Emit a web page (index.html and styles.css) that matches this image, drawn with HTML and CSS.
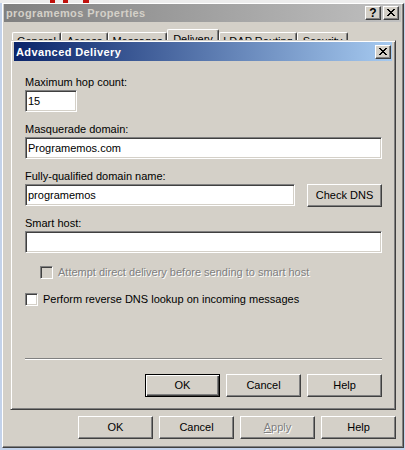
FILE: index.html
```html
<!DOCTYPE html>
<html>
<head>
<meta charset="utf-8">
<link rel="stylesheet" href="styles.css">
</head>
<body>
<div class="strip"><span class="mark m1"></span><span class="mark m2"></span><span class="mark m3"></span></div>
<div class="window">
  <div class="titlebar inactive">
    <span class="title-text">programemos Properties</span>
    <div class="cap-buttons">
      <span class="cap-btn qmark">?</span>
      <span class="cap-btn"><svg class="xglyph" width="8" height="7" viewBox="0 0 8 7"><path d="M0 0h2v1h-2z M6 0h2v1h-2z M1 1h2v1h-2z M5 1h2v1h-2z M2 2h4v1h-4z M3 3h2v1h-2z M2 4h4v1h-4z M1 5h2v1h-2z M5 5h2v1h-2z M0 6h2v1h-2z M6 6h2v1h-2z" fill="#000"/></svg></span>
    </div>
  </div>
  <div class="client">
    <div class="tabs">
      <div class="tab t-general">General</div>
      <div class="tab t-access">Access</div>
      <div class="tab t-messages">Messages</div>
      <div class="tab t-delivery selected">Delivery</div>
      <div class="tab t-ldap">LDAP Routing</div>
      <div class="tab t-security">Security</div>
    </div>
    <div class="panel"></div>
    <div class="buttons outer-buttons">
      <button class="btn">OK</button>
      <button class="btn">Cancel</button>
      <button class="btn disabled"><span class="ul">A</span>pply</button>
      <button class="btn">Help</button>
    </div>
  </div>
</div>

<div class="dialog">
  <div class="titlebar active">
    <span class="title-text">Advanced Delivery</span>
    <div class="cap-buttons">
      <span class="cap-btn"><svg class="xglyph" width="8" height="7" viewBox="0 0 8 7"><path d="M0 0h2v1h-2z M6 0h2v1h-2z M1 1h2v1h-2z M5 1h2v1h-2z M2 2h4v1h-4z M3 3h2v1h-2z M2 4h4v1h-4z M1 5h2v1h-2z M5 5h2v1h-2z M0 6h2v1h-2z M6 6h2v1h-2z" fill="#000"/></svg></span>
    </div>
  </div>
  <div class="dlg-body">
    <div class="field">
      <div class="label">Maximum hop count:</div>
      <div class="edit edit-short">15</div>
    </div>
    <div class="field">
      <div class="label">Masquerade domain:</div>
      <div class="edit">Programemos.com</div>
    </div>
    <div class="field">
      <div class="label">Fully-qualified domain name:</div>
      <div class="edit-row">
        <div class="edit edit-fqdn">programemos</div>
        <button class="btn">Check DNS</button>
      </div>
    </div>
    <div class="field field-smart">
      <div class="label">Smart host:</div>
      <div class="edit"></div>
    </div>
    <div class="checkrow check-indent">
      <span class="check disabled"></span>
      <span class="check-label disabled-text">Attempt direct delivery before sending to smart host</span>
    </div>
    <div class="checkrow check-reverse">
      <span class="check"></span>
      <span class="check-label">Perform reverse DNS lookup on incoming messages</span>
    </div>
    <div class="separator"></div>
    <div class="buttons dlg-buttons">
      <button class="btn default">OK</button>
      <button class="btn">Cancel</button>
      <button class="btn">Help</button>
    </div>
  </div>
</div>
</body>
</html>
```
FILE: styles.css
```css
* { box-sizing: border-box; }
html, body { margin: 0; padding: 0; }
body {
  width: 405px;
  height: 450px;
  background: #c3d2ea;
  font-family: "Liberation Sans", Arial, sans-serif;
  font-size: 11px;
  color: #000;
  overflow: hidden;
  position: relative;
}
.strip { height: 3px; background: #ececec; display: flex; }
.mark { height: 3px; background: #c0100c; }
.m1 { margin-left: 50px; width: 5px; }
.m2 { margin-left: 8px; width: 5px; }
.m3 { margin-left: 15px; width: 6px; }

.window {
  margin-left: 2px;
  width: 402px;
  height: 445px;
  background: #d4d0c8;
  border: 1px solid;
  border-color: #fff #404040 #404040 #fff;
  box-shadow: inset -1px -1px #808080;
  padding: 0 2px 2px 1px;
  display: flex;
  flex-direction: column;
}

.titlebar {
  height: 18px;
  flex: none;
  display: flex;
  align-items: center;
  padding: 0 2px;
  font-weight: bold;
  letter-spacing: 0.4px;
  white-space: nowrap;
}
.inactive { background: linear-gradient(to right, #808080, #c0c0c0); color: #d4d0c8; }
.active { background: linear-gradient(to right, #0a246a, #a6caf0); color: #fff; height: 19px; }
.title-text { flex: 1; }
.cap-buttons { display: flex; gap: 2px; }
.cap-btn {
  width: 16px;
  height: 14px;
  background: #d4d0c8;
  border: 1px solid;
  border-color: #fff #404040 #404040 #fff;
  box-shadow: inset -1px -1px #808080;
  display: flex;
  align-items: center;
  justify-content: center;
  color: #000;
  letter-spacing: 0;
}
.qmark { font-size: 12px; line-height: 12px; font-weight: bold; padding-bottom: 1px; }
.xglyph { display: block; shape-rendering: crispEdges; margin-left: -1px; margin-top: -1px; }

.client { flex: 1; display: flex; flex-direction: column; }
.tabs {
  display: flex;
  align-items: flex-end;
  height: 13px;
  margin-top: 7px;
  padding-left: 8px;
  flex: none;
}
.tab {
  height: 10px;
  border: 1px solid;
  border-bottom: none;
  border-color: #fff #404040 transparent #fff;
  box-shadow: inset -1px 0 #808080;
  border-radius: 2px 2px 0 0;
  text-align: center;
  line-height: 13px;
  padding-top: 2px;
  overflow: hidden;
  white-space: nowrap;
}
.tab.selected { height: 13px; padding-top: 3px; }
.t-general { width: 49px; }
.t-access { width: 47px; }
.t-messages { width: 59px; }
.t-delivery { width: 52px; }
.t-ldap { width: 78px; }
.t-security { width: 51px; }

.panel {
  flex: 1;
  margin: 0 5px 0 6px;
  border: 1px solid;
  border-color: #fff #404040 #404040 #fff;
  box-shadow: inset -1px -1px #808080;
}

.buttons { display: flex; justify-content: flex-end; gap: 6px; flex: none; }
.outer-buttons { margin-top: 7px; margin-bottom: 6px; padding-right: 5px; }

.btn {
  -webkit-appearance: none;
  appearance: none;
  width: 75px;
  height: 23px;
  margin: 0;
  padding: 0 0 1px 0;
  background: #d4d0c8;
  border: 1px solid;
  border-color: #fff #404040 #404040 #fff;
  box-shadow: inset -1px -1px #808080;
  font-family: inherit;
  font-size: 11px;
  line-height: 13px;
  color: #000;
  display: flex;
  align-items: center;
  justify-content: center;
}
.btn.default {
  border-color: #000;
  box-shadow: inset 1px 1px #fff, inset -1px -1px #404040, inset -2px -2px #808080;
}
.btn.disabled { color: #808080; text-shadow: 1px 1px #fff; }
.ul { text-decoration: underline; }

.dialog {
  position: absolute;
  left: 10px;
  top: 40px;
  width: 386px;
  height: 370px;
  background: #d4d0c8;
  border: 1px solid;
  border-color: #d4d0c8 #404040 #404040 #d4d0c8;
  box-shadow: inset 1px 1px #fff, inset -1px -1px #808080;
  padding: 1px 3px 3px 3px;
  display: flex;
  flex-direction: column;
}
.dialog .cap-buttons { margin-right: -1px; }

.dlg-body {
  flex: 1;
  padding: 15px 10px 0 11px;
  display: flex;
  flex-direction: column;
}
.field { display: flex; flex-direction: column; }
.field + .field { margin-top: 11px; }
.field-smart { margin-top: 10px !important; }
.label { height: 13px; line-height: 13px; margin-bottom: 1px; white-space: nowrap; }
.edit {
  height: 22px;
  background: #fff;
  border: 1px solid;
  border-color: #808080 #fff #fff #808080;
  box-shadow: inset 1px 1px #404040, inset -1px -1px #d4d0c8;
  padding: 0 2px;
  line-height: 20px;
  white-space: nowrap;
}
.edit-short { width: 52px; }
.edit-row { display: flex; gap: 12px; align-items: flex-start; }
.edit-fqdn { width: 270px; }

.checkrow { display: flex; align-items: center; gap: 5px; height: 13px; white-space: nowrap; }
.check-indent { margin-top: 13px; padding-left: 15px; }
.check-reverse { margin-top: 14px; }
.check {
  width: 13px;
  height: 13px;
  flex: none;
  background: #fff;
  border: 1px solid;
  border-color: #808080 #fff #fff #808080;
  box-shadow: inset 1px 1px #404040, inset -1px -1px #d4d0c8;
}
.check.disabled { background: #d4d0c8; }
.check-label { line-height: 13px; }
.disabled-text { color: #808080; text-shadow: 1px 1px #fff; }

.separator {
  margin-top: 52px;
  height: 2px;
  border-top: 1px solid #808080;
  border-bottom: 1px solid #fff;
}
.dlg-buttons { margin-top: 14px; }
```
